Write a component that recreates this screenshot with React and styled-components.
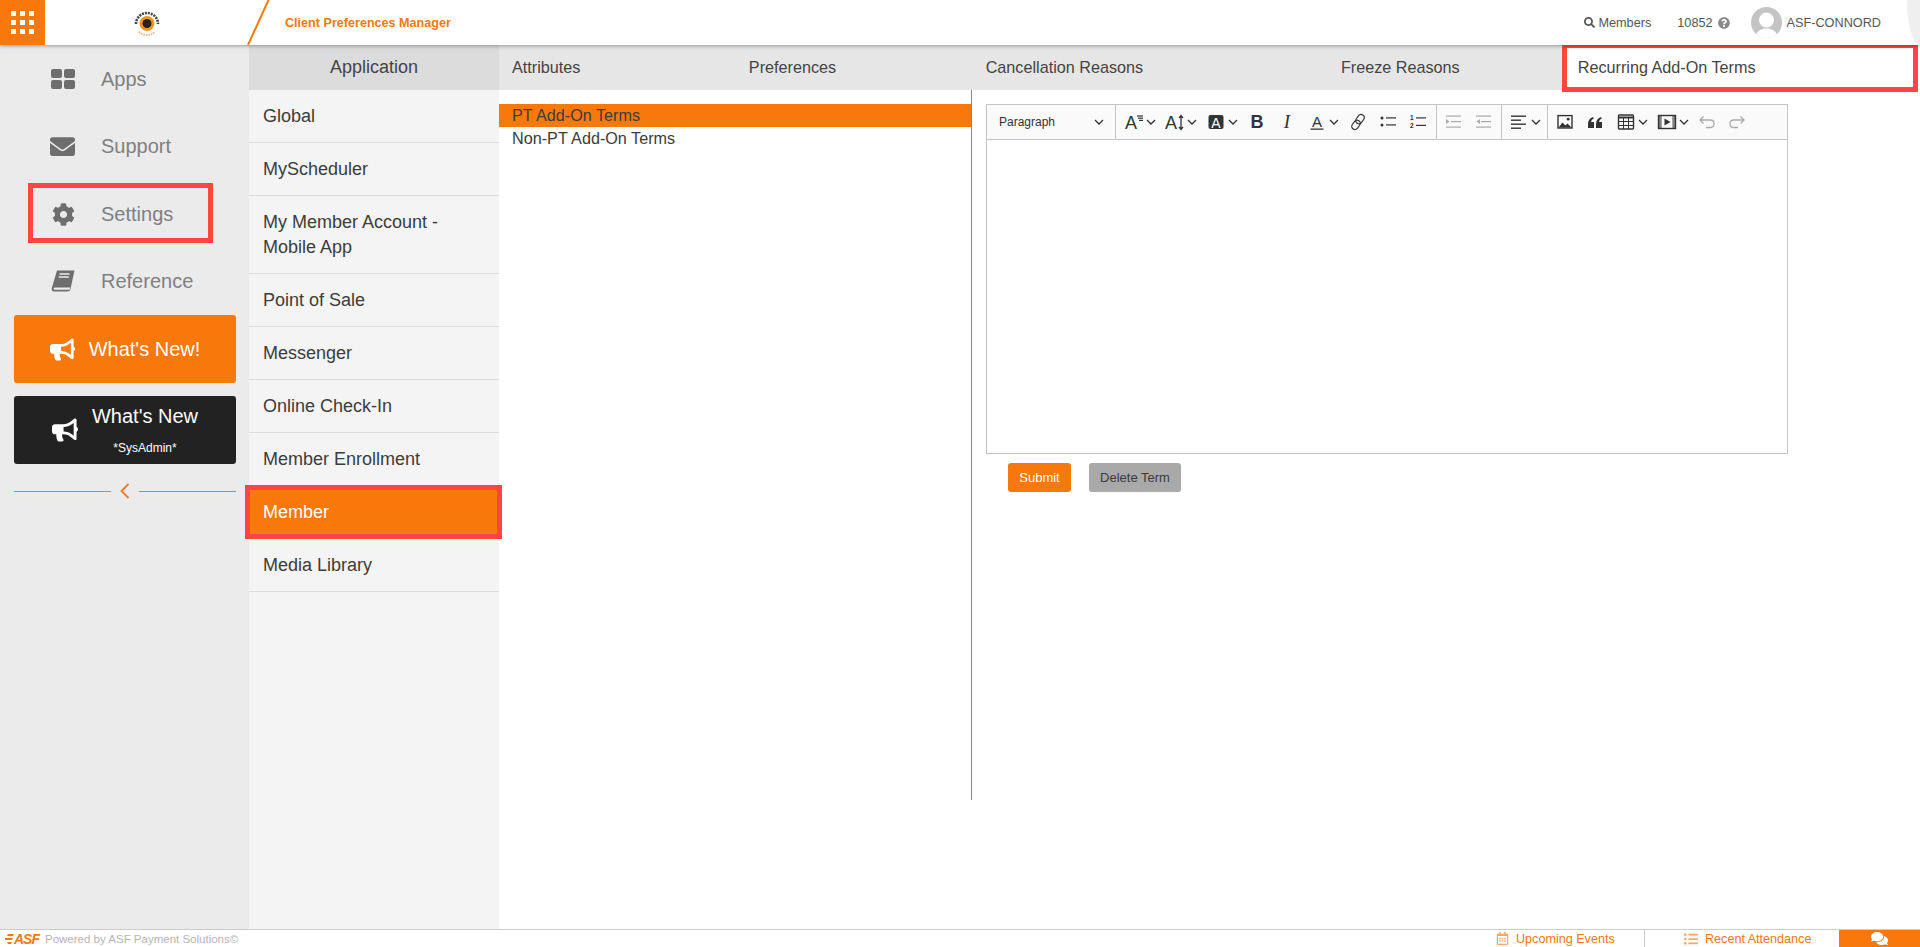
import React from 'react';
import styled, {createGlobalStyle} from 'styled-components';
import {
  FaEnvelope, FaCog, FaBullhorn, FaSearch, FaQuestionCircle,
  FaRegCalendarAlt, FaListUl, FaComments
} from 'react-icons/fa';

const ORANGE = '#f7790b';
const RED = '#ff4444';

const GlobalStyle = createGlobalStyle`
  html, body {
    margin: 0;
    padding: 0;
    height: 100%;
    background: #fff;
    font-family: "Liberation Sans", Arial, sans-serif;
    overflow: hidden;
  }
  * { box-sizing: border-box; }
`;

const Page = styled.div`
  height: 947px;
  display: flex;
  flex-direction: column;
`;

/* top bar */
const Header = styled.header`
  position: relative;
  z-index: 2;
  flex: 0 0 45px;
  display: flex;
  align-items: center;
  background: #fff;
  box-shadow: 0 1px 4px rgba(0, 0, 0, .35);
`;

const GridButton = styled.div`
  width: 45px;
  height: 45px;
  background: ${ORANGE};
  display: flex;
  align-items: center;
  justify-content: center;
`;

const LogoCell = styled.div`
  width: 200px;
  height: 45px;
  padding-left: 3px;
  display: flex;
  align-items: center;
  justify-content: center;
`;

const Slash = styled.svg`
  width: 25px;
  height: 45px;
`;

const Title = styled.div`
  margin-left: 15px;
  flex: 1;
  color: ${ORANGE};
  font-size: 12.6px;
  font-weight: bold;
`;

const HeaderLink = styled.div`
  display: flex;
  align-items: center;
  gap: ${p => p.$gap || 4}px;
  margin-right: ${p => p.$right || 0}px;
  font-size: 12.7px;
  color: #555;
  svg { color: ${p => p.$iconColor || '#555'}; }
`;

const Avatar = styled.svg`
  width: 31px;
  height: 31px;
  border-radius: 50%;
`;

const Corner = styled.div`
  width: 13px;
  height: 45px;
  margin-left: 26px;
  background: #efefef;
  border-bottom-left-radius: 100%;
`;

/* body */
const Main = styled.div`
  flex: 1;
  display: flex;
  min-height: 0;
`;

const Sidebar = styled.nav`
  width: 249px;
  background: #ebebeb;
  flex: none;
`;

const NavItem = styled.div`
  position: relative;
  height: 67.5px;
  padding: 1px 0 0 50px;
  display: flex;
  align-items: center;
  font-size: 20px;
  color: #808080;
`;

const NavIcon = styled.span`
  width: 51px;
  padding-left: ${p => p.$pad || 0}px;
  display: flex;
  color: #6e6e6e;
`;

const SettingsMark = styled.div`
  position: absolute;
  left: 28px;
  top: 3px;
  width: 185px;
  height: 60px;
  border: 5px solid ${RED};
`;

const NewsButton = styled.div`
  height: 68px;
  margin: ${p => p.$top}px 13px 0 14px;
  border-radius: 3px;
  background: ${p => p.$dark ? '#222' : ORANGE};
  color: #fff;
  display: flex;
  align-items: center;
  justify-content: center;
  gap: 14px;
  font-size: 20px;
`;

const NewsText = styled.div`
  display: flex;
  flex-direction: column;
  align-items: center;
`;

const NewsSub = styled.span`
  margin-top: 13px;
  font-size: 12px;
`;

const Collapse = styled.div`
  margin: 17px 13px 0 14px;
  height: 20px;
  display: flex;
  align-items: center;
  gap: 9px;
  color: #ef7b2d;
`;

const CollapseLine = styled.div`
  flex: 1;
  height: 1px;
  background: #ef7b2d;
`;

const SubMenu = styled.div`
  width: 250px;
  flex: none;
  background: #f4f4f4;
`;

const SubHead = styled.div`
  height: 45px;
  background: #dcdcdc;
  color: #444;
  font-size: 18px;
  display: flex;
  align-items: center;
  justify-content: center;
`;

const SubItem = styled.div`
  position: relative;
  padding: 14px 14px 13px;
  line-height: 25px;
  font-size: 18px;
  color: ${p => p.$active ? '#fff' : '#3c3c3c'};
  background: ${p => p.$active ? ORANGE : 'transparent'};
  border-bottom: 1px solid #dddddd;
`;

const MemberMark = styled.div`
  position: absolute;
  inset: -1px -3px -1px -4px;
  border: 5px solid ${RED};
`;

const Content = styled.div`
  flex: 1;
  display: flex;
  flex-direction: column;
  min-width: 0;
`;

const Tabs = styled.div`
  height: 45px;
  flex: none;
  display: flex;
  background: #e6e6e6;
`;

const Tab = styled.div`
  position: relative;
  width: ${p => p.$cols / 12 * 100}%;
  padding-left: 13px;
  display: flex;
  align-items: center;
  font-size: 16.2px;
  color: #444;
  background: ${p => p.$active ? '#fff' : 'transparent'};
`;

const TabMark = styled.div`
  position: absolute;
  inset: -2px 2px -2px -3px;
  border: 5px solid ${RED};
`;

const Panels = styled.div`
  display: flex;
  align-items: flex-start;
`;

const TermList = styled.div`
  width: 473px;
  height: 710px;
  flex: none;
  padding-top: 14px;
  border-right: 1px solid #888;
`;

const Term = styled.div`
  height: 23px;
  padding-left: 13px;
  line-height: 23px;
  font-size: 16.2px;
  color: #3c3c3c;
  background: ${p => p.$active ? ORANGE : 'transparent'};
`;

const EditorPane = styled.div`
  width: 802px;
  margin: 14px 0 0 14px;
`;

const Toolbar = styled.div`
  height: 36px;
  display: flex;
  align-items: center;
  background: #fafafa;
  border: 1px solid #c4c4c4;
`;

const Paragraph = styled.div`
  width: 128px;
  padding: 0 11px 0 12px;
  display: flex;
  align-items: center;
  justify-content: space-between;
  font-size: 12px;
  color: #333;
`;

const ToolGroup = styled.div`
  height: 100%;
  display: flex;
  align-items: center;
  padding: 0 ${p => p.$right || 2}px 0 ${p => p.$left || 2}px;
  border-left: 1px solid #c4c4c4;
`;

const Tool = styled.div`
  width: ${p => p.$width || 30}px;
  height: 100%;
  flex: none;
  padding-left: 5px;
  display: flex;
  align-items: center;
  gap: 2px;
  color: ${p => p.$off ? '#aaa' : '#333'};
`;

const ToolSvg = styled.svg`
  width: 20px;
  height: 20px;
  flex: none;
  text {
    font-family: "Liberation Sans", Arial, sans-serif;
    fill: currentColor;
  }
`;

const EditorBody = styled.div`
  height: 314px;
  background: #fff;
  border: 1px solid #c4c4c4;
  border-top: 0;
`;

const Actions = styled.div`
  margin: 9px 0 0 22px;
  display: flex;
  gap: 18px;
`;

const ActionButton = styled.button`
  height: 29px;
  padding: 0;
  width: ${p => p.$width}px;
  border: 0;
  border-radius: 3px;
  font-family: inherit;
  font-size: 13px;
  background: ${p => p.$gray ? '#a9a9a9' : ORANGE};
  color: ${p => p.$gray ? '#3c3c3c' : '#fff'};
`;

/* footer */
const Footer = styled.footer`
  flex: 0 0 18px;
  display: flex;
  align-items: center;
  background: #fff;
  border-top: 1px solid #ccc;
`;

const AsfLogo = styled.div`
  display: flex;
  align-items: center;
  width: 45px;
  padding-left: 5px;
  color: ${ORANGE};
  font-size: 14px;
  line-height: 14px;
  font-weight: bold;
  font-style: italic;
  letter-spacing: -1px;
`;

const Powered = styled.div`
  flex: 1;
  font-size: 11.5px;
  color: #b5b5b5;
`;

const FooterLink = styled.div`
  width: ${p => p.$width}px;
  height: 100%;
  display: flex;
  align-items: center;
  padding-left: ${p => p.$pad}px;
  gap: 7px;
  font-size: 12.6px;
  color: ${ORANGE};
  border-right: ${p => p.$line ? '1px solid #ccc' : '0'};
  svg { color: #f9a764; }
`;

const ChatTab = styled.div`
  width: 81px;
  height: 100%;
  background: ${ORANGE};
  color: #fff;
  display: flex;
  align-items: center;
  justify-content: center;
`;

/* drawings */
const GridIcon = () => (
  <svg width="23" height="23" viewBox="0 0 23 23" fill="#fff">
    {[0, 9, 18].map(y => [0, 9, 18].map(x => <rect key={x + '-' + y} x={x} y={y} width="5" height="5"/>))}
  </svg>
);

const SunLogo = () => (
  <svg width="28" height="28" viewBox="0 0 28 28">
    <path d="M3 15a11 11 0 0 1 22 0" fill="none" stroke="#444" strokeWidth="2.600" strokeDasharray="2 1"/>
    <path d="M6 23a12 12 0 0 0 16 0" fill="none" stroke="#f4b183" strokeWidth="1.800" strokeDasharray="1.500 1"/>
    <circle cx="14" cy="14.500" r="7.500" fill="#f7941d"/>
    <circle cx="14" cy="14.500" r="4.500" fill="#222"/>
  </svg>
);

const AppsIcon = () => (
  <svg width="24" height="20" viewBox="0 0 24 20" fill="currentColor">
    <rect width="11" height="9" rx="2"/><rect x="13" width="11" height="9" rx="2"/>
    <rect y="11" width="11" height="9" rx="2"/><rect x="13" y="11" width="11" height="9" rx="2"/>
  </svg>
);

const BookIcon = () => (
  <svg width="24" height="23" viewBox="0 0 24 23">
    <path d="M6 .500h17.500L19.500 19c-.3 1.500-1.200 2.500-3 2.500H3C1 21.500.300 20 .800 18z" fill="currentColor"/>
    <path d="M3.500 17.500h15.800l-.6 2.300H3.300c-.8 0-1-1.700.2-2.300z" fill="#ebebeb"/>
    <path d="M8.500 4h10M7.800 7h10" stroke="#ebebeb" strokeWidth="1.300"/>
  </svg>
);

const Chevron = () => (
  <svg width="10" height="6" viewBox="0 0 10 6" fill="none" stroke="currentColor" strokeWidth="1.300" style={{flex: 'none'}}>
    <path d="M1 1l4 4 4-4"/>
  </svg>
);

const Line = ({x, y, w, h = 1.2}) => <rect x={x} y={y} width={w} height={h} fill="currentColor"/>;

const FontSizeIcon = () => (
  <ToolSvg viewBox="0 0 20 20">
    <text x="1" y="17" fontSize="18">A</text>
    <Line x={13} y={3.400} w={6}/><Line x={14} y={5.600} w={5}/><Line x={15} y={7.800} w={4}/>
  </ToolSvg>
);

const LineHeightIcon = () => (
  <ToolSvg viewBox="0 0 20 20">
    <text x="0" y="17" fontSize="18">A</text>
    <path d="M16 4v13M14 6l2-2.400L18 6M14 15l2 2.400 2-2.400" fill="none" stroke="currentColor" strokeWidth="1.300"/>
  </ToolSvg>
);

const HighlightIcon = () => (
  <ToolSvg viewBox="0 0 20 20">
    <rect x="2.500" y="3" width="15" height="14" rx="2" fill="#333"/>
    <text x="10" y="15.500" fontSize="14" textAnchor="middle" style={{fill: '#fff'}}>A</text>
  </ToolSvg>
);

const BoldIcon = () => (
  <ToolSvg viewBox="0 0 20 20">
    <text x="10" y="16" fontSize="18" fontWeight="bold" textAnchor="middle">B</text>
  </ToolSvg>
);

const ItalicIcon = () => (
  <ToolSvg viewBox="0 0 20 20">
    <text x="10" y="16" fontSize="19" fontStyle="italic" textAnchor="middle" style={{fontFamily: '"Liberation Serif", serif'}}>I</text>
  </ToolSvg>
);

const FontColorIcon = () => (
  <ToolSvg viewBox="0 0 20 20">
    <text x="10" y="14.500" fontSize="15" textAnchor="middle">A</text>
    <Line x={3.500} y={16.500} w={13} h={1.300}/>
  </ToolSvg>
);

const LinkIcon = () => (
  <ToolSvg viewBox="0 0 20 20" fill="none" stroke="currentColor" strokeWidth="1.200">
    <g transform="rotate(-55 10 10)">
      <rect x="1.500" y="6.800" width="10" height="6.400" rx="3.200"/>
      <rect x="8.500" y="6.800" width="10" height="6.400" rx="3.200"/>
    </g>
  </ToolSvg>
);

const BulletIcon = () => (
  <ToolSvg viewBox="0 0 20 20">
    <circle cx="4" cy="6" r="1.500" fill="currentColor"/><circle cx="4" cy="13" r="1.500" fill="currentColor"/>
    <Line x={8} y={5.300} w={10}/><Line x={8} y={12.300} w={10}/>
  </ToolSvg>
);

const NumberIcon = () => (
  <ToolSvg viewBox="0 0 20 20">
    <text x="2" y="8" fontSize="6.500" fontWeight="bold">1</text>
    <text x="2" y="15.500" fontSize="6.500" fontWeight="bold">2</text>
    <Line x={8} y={5.300} w={10}/><Line x={8} y={12.800} w={10}/>
  </ToolSvg>
);

const IndentIcon = ({out}) => (
  <ToolSvg viewBox="0 0 20 20">
    <Line x={2} y={3.500} w={15}/><Line x={7} y={9} w={10}/><Line x={2} y={14.500} w={15}/>
    <path d={out ? 'M6 7v5l-3.500-2.500z' : 'M2 7v5l3.500-2.500z'} fill="currentColor"/>
  </ToolSvg>
);

const AlignIcon = () => (
  <ToolSvg viewBox="0 0 20 20">
    <Line x={2} y={3.500} w={15} h={1.400}/><Line x={2} y={7.500} w={10} h={1.400}/>
    <Line x={2} y={11.500} w={15} h={1.400}/><Line x={2} y={15.500} w={10} h={1.400}/>
  </ToolSvg>
);

const ImageIcon = () => (
  <ToolSvg viewBox="0 0 20 20">
    <rect x="3" y="3.600" width="14" height="12.400" fill="none" stroke="currentColor" strokeWidth="1.400"/>
    <path d="M3.500 15.500l4-5 3 3 2-2 4 4z" fill="currentColor"/>
    <circle cx="13.200" cy="7.200" r="1.400" fill="currentColor"/>
  </ToolSvg>
);

const QuoteIcon = () => (
  <ToolSvg viewBox="0 0 20 20" fill="currentColor">
    <path d="M3 16v-4.200C3 8.600 5 6 8 5l.8 1.500C7 7.400 6.200 8.700 6.100 10H9v6z"/>
    <path d="M11 16v-4.200c0-3.200 2-5.800 5-6.800l.8 1.500c-1.800.9-2.600 2.200-2.700 3.500H17v6z"/>
  </ToolSvg>
);

const TableIcon = () => (
  <ToolSvg viewBox="0 0 20 20" fill="none" stroke="currentColor" strokeWidth="1">
    <rect x="2.500" y="3" width="15" height="14" rx="1" strokeWidth="1.400"/>
    <path d="M2.500 5.500h15" strokeWidth="2"/>
    <path d="M2.500 9.500h15M2.500 13.500h15M7.500 5v12M12.500 5v12"/>
  </ToolSvg>
);

const MediaIcon = () => (
  <ToolSvg viewBox="0 0 20 20">
    <rect x="1.500" y="3.500" width="17" height="13" fill="none" stroke="currentColor" strokeWidth="1.400"/>
    <rect x="1.500" y="3.500" width="3.200" height="13" fill="currentColor" opacity=".6"/>
    <rect x="15.300" y="3.500" width="3.200" height="13" fill="currentColor" opacity=".6"/>
    <path d="M7.500 6.500v7l6-3.500z" fill="currentColor"/>
  </ToolSvg>
);

const UndoIcon = ({redo}) => (
  <ToolSvg viewBox="0 0 20 20" fill="none" stroke="currentColor" strokeWidth="1.300">
    <g transform={redo ? 'matrix(-1 0 0 1 20 0)' : undefined}>
      <path d="M6.500 4.500L3 8l3.500 3.500M3 8h10c2.500 0 4 1.700 4 3.700S15.500 15.500 13 15.500H9"/>
    </g>
  </ToolSvg>
);

const DropTool = ({children, width = 41}) => <Tool $width={width}>{children}<Chevron/></Tool>;

const menu = ['Global', 'MyScheduler', 'My Member Account - Mobile App', 'Point of Sale', 'Messenger',
  'Online Check-In', 'Member Enrollment', 'Member', 'Media Library'];

const tabs = [
  {label: 'Attributes', cols: 2},
  {label: 'Preferences', cols: 2},
  {label: 'Cancellation Reasons', cols: 3},
  {label: 'Freeze Reasons', cols: 2},
  {label: 'Recurring Add-On Terms', cols: 3, active: true}
];

export default function App() {
  return (
    <Page>
      <GlobalStyle/>
      <Header>
        <GridButton><GridIcon/></GridButton>
        <LogoCell><SunLogo/></LogoCell>
        <Slash viewBox="0 0 25 45">
          <path d="M23.500 0L3 45" stroke={ORANGE} strokeWidth="2" fill="none"/>
        </Slash>
        <Title>Client Preferences Manager</Title>
        <HeaderLink $right={26} $gap={3}><FaSearch size={11}/>Members</HeaderLink>
        <HeaderLink $right={21} $gap={5} $iconColor="#888">10852<FaQuestionCircle size={12}/></HeaderLink>
        <HeaderLink $gap={5}>
          <Avatar viewBox="0 0 31 31">
            <rect width="31" height="31" fill="#c4c4c4"/>
            <circle cx="15.500" cy="13" r="7.500" fill="#fff"/>
            <path d="M4 31c1-7 6-9.500 11.500-9.500S26 24 27 31z" fill="#fff"/>
          </Avatar>
          ASF-CONNORD
        </HeaderLink>
        <Corner/>
      </Header>

      <Main>
        <Sidebar>
          <NavItem><NavIcon $pad={1}><AppsIcon/></NavIcon>Apps</NavItem>
          <NavItem><NavIcon><FaEnvelope size={25}/></NavIcon>Support</NavItem>
          <NavItem>
            <NavIcon $pad={2}><FaCog size={23}/></NavIcon>Settings
            <SettingsMark/>
          </NavItem>
          <NavItem><NavIcon $pad={1}><BookIcon/></NavIcon>Reference</NavItem>
          <NewsButton $top={0}><FaBullhorn size={25}/>What's New!</NewsButton>
          <NewsButton $top={13} $dark>
            <FaBullhorn size={26}/>
            <NewsText>What's New<NewsSub>*SysAdmin*</NewsSub></NewsText>
          </NewsButton>
          <Collapse>
            <CollapseLine/>
            <svg width="10" height="16" viewBox="0 0 10 16" fill="none" stroke="currentColor" strokeWidth="1.800">
              <path d="M8.500 1L1.500 8l7 7"/>
            </svg>
            <CollapseLine/>
          </Collapse>
        </Sidebar>

        <SubMenu>
          <SubHead>Application</SubHead>
          {menu.map(item => (
            <SubItem key={item} $active={item === 'Member'}>
              {item}
              {item === 'Member' && <MemberMark/>}
            </SubItem>
          ))}
        </SubMenu>

        <Content>
          <Tabs>
            {tabs.map(tab => (
              <Tab key={tab.label} $cols={tab.cols} $active={tab.active}>
                {tab.label}
                {tab.active && <TabMark/>}
              </Tab>
            ))}
          </Tabs>
          <Panels>
            <TermList>
              <Term $active>PT Add-On Terms</Term>
              <Term>Non-PT Add-On Terms</Term>
            </TermList>
            <EditorPane>
              <Toolbar>
                <Paragraph>Paragraph<Chevron/></Paragraph>
                <ToolGroup $left={3} $right={3}>
                  <DropTool><FontSizeIcon/></DropTool>
                  <DropTool><LineHeightIcon/></DropTool>
                  <DropTool><HighlightIcon/></DropTool>
                  <Tool><BoldIcon/></Tool>
                  <Tool><ItalicIcon/></Tool>
                  <DropTool><FontColorIcon/></DropTool>
                  <Tool><LinkIcon/></Tool>
                  <Tool><BulletIcon/></Tool>
                  <Tool><NumberIcon/></Tool>
                </ToolGroup>
                <ToolGroup>
                  <Tool $off><IndentIcon/></Tool>
                  <Tool $off><IndentIcon out/></Tool>
                </ToolGroup>
                <ToolGroup>
                  <DropTool><AlignIcon/></DropTool>
                </ToolGroup>
                <ToolGroup>
                  <Tool><ImageIcon/></Tool>
                  <Tool $width={31}><QuoteIcon/></Tool>
                  <DropTool><TableIcon/></DropTool>
                  <DropTool width={40}><MediaIcon/></DropTool>
                  <Tool $off><UndoIcon/></Tool>
                  <Tool $off><UndoIcon redo/></Tool>
                </ToolGroup>
              </Toolbar>
              <EditorBody/>
              <Actions>
                <ActionButton $width={63}>Submit</ActionButton>
                <ActionButton $width={92} $gray>Delete Term</ActionButton>
              </Actions>
            </EditorPane>
          </Panels>
        </Content>
      </Main>

      <Footer>
        <AsfLogo>
          <svg width="9" height="10" viewBox="0 0 9 10" fill={ORANGE}>
            <path d="M3 0h6l-1 2H2zM0 4h8L7 6H0zM2 8h5l-1 2H3z"/>
          </svg>
          ASF
        </AsfLogo>
        <Powered>Powered by ASF Payment Solutions©</Powered>
        <FooterLink $width={149} $pad={0} $line><FaRegCalendarAlt size={13}/>Upcoming Events</FooterLink>
        <FooterLink $width={194} $pad={39}><FaListUl size={14}/>Recent Attendance</FooterLink>
        <ChatTab><FaComments size={17}/></ChatTab>
      </Footer>
    </Page>
  );
}
